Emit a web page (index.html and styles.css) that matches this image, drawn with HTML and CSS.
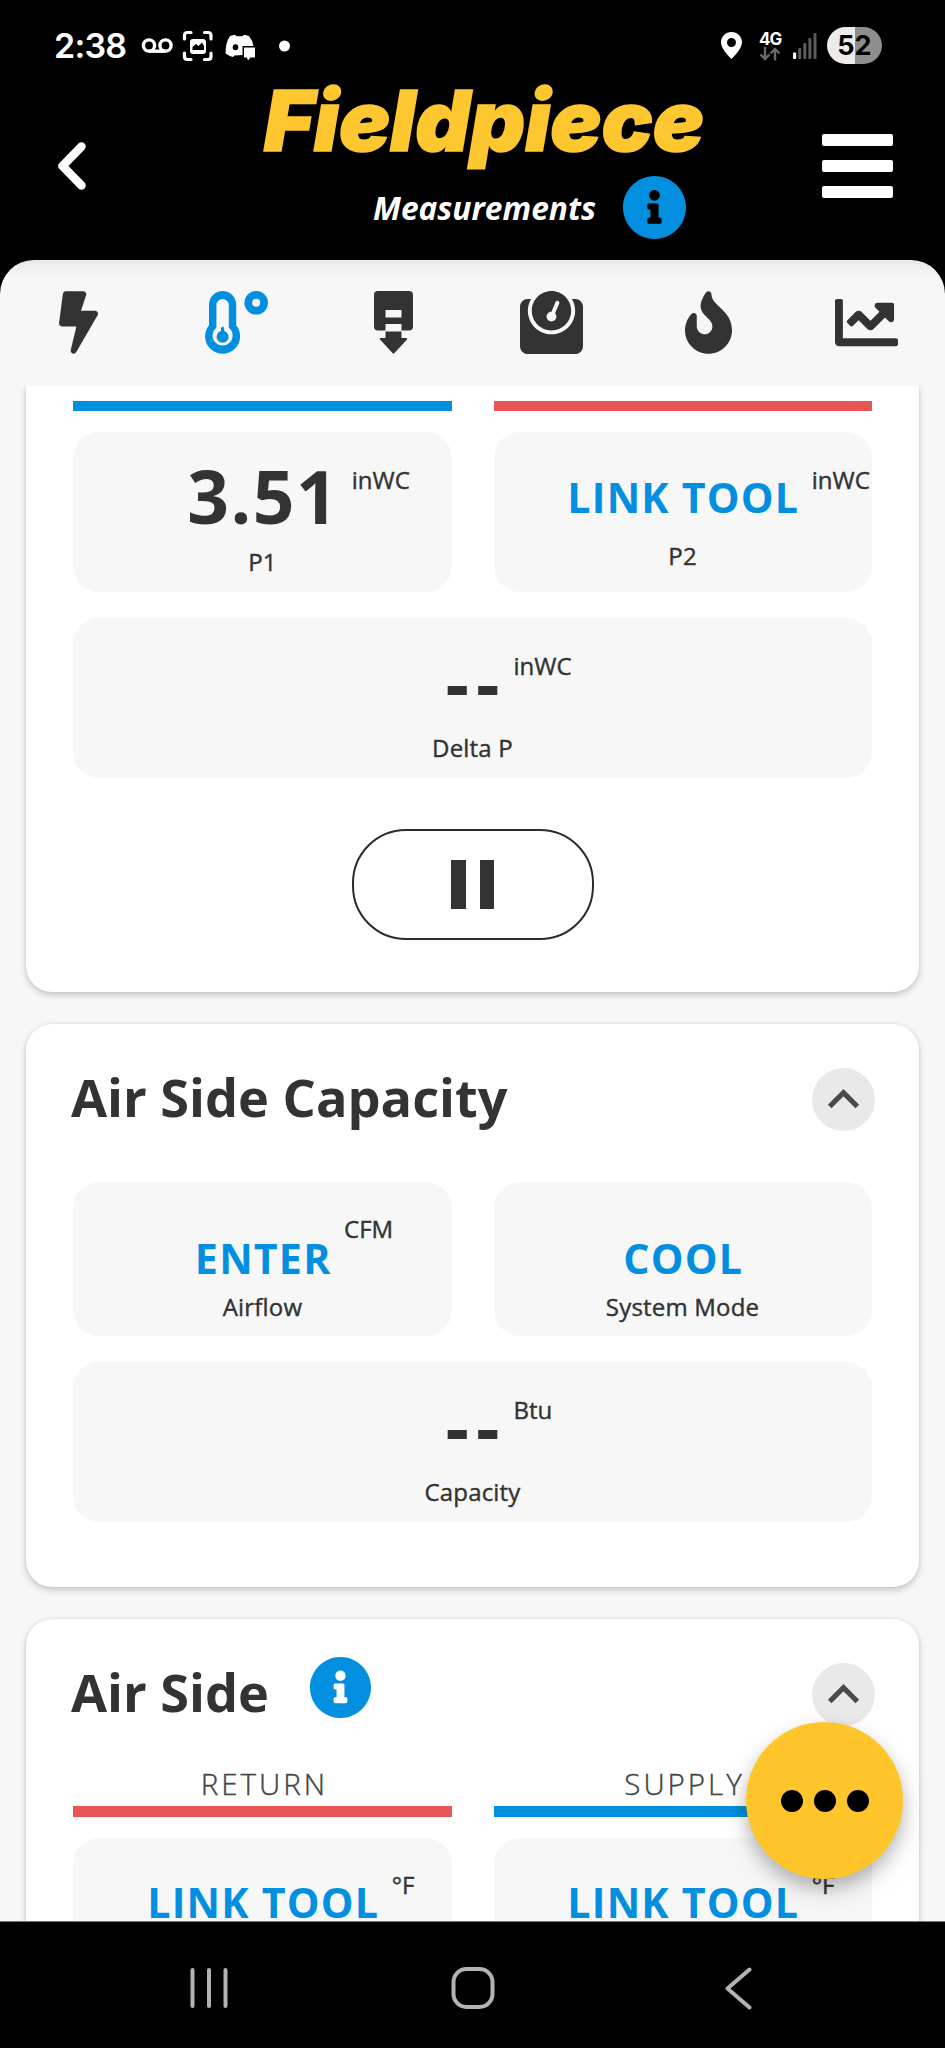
FILE: index.html
```html
<!DOCTYPE html>
<html lang="en">
<head>
    <meta charset="UTF-8">
    <meta name="viewport" content="width=device-width, initial-scale=1.0">
    <title>Measurements</title>
    <link rel="stylesheet" href="styles.css">
</head>
<body>
    <div class="screen">
        <!-- Status bar -->
        <div class="status-bar">
            <span class="clock">2:38</span>
            <svg class="status-left" width="150" height="40" viewBox="0 0 150 40" fill="none">
                <g stroke="#fff" stroke-width="3.4">
                    <circle cx="8" cy="19.5" r="5.6"/>
                    <circle cx="24.5" cy="19.5" r="5.6"/>
                    <path d="M8 25.2h16.5"/>
                </g>
                <g stroke="#fff" stroke-width="3.2" stroke-linecap="round">
                    <path d="M43.5 13V9.5q0-3 3-3H50M63.5 6.5H67q3 0 3 3V13M70 27v3.5q0 3-3 3h-3.5M50 33.5h-3.5q-3 0-3-3V27"/>
                </g>
                <rect x="49" y="13" width="16" height="15" rx="3" fill="#fff"/>
                <path d="M51.5 24v-3l3.5-3 2.500 2 3.500-3.500 2 3.500v4z" fill="#000"/>
                <path d="M89 10l5-1.200 1.500 1.500h6l1.500-1.500 5 1.200q4 5 4.500 10h-11v9l-8 .5-1.500 1.500q-4-1-7.500-3.500 0-11 4.500-17.500z" fill="#fff"/>
                <ellipse cx="94.5" cy="21.3" rx="2.8" ry="3" fill="#000"/>
                <path d="M103 21.5h11v10h-4.500l-2.500 3-1-3h-3z" fill="#fff"/>
                <circle cx="143.5" cy="20" r="5.5" fill="#fff"/>
            </svg>
            <svg class="pin" width="21" height="27" viewBox="0 0 21 27">
                <path fill="#fff" fill-rule="evenodd" d="M10.5 0C4.500 0 0 4.600 0 10.300 0 17.500 10.500 27 10.500 27S21 17.500 21 10.300C21 4.600 16.500 0 10.500 0zm0 6a4.500 4.500 0 1 1 0 9 4.500 4.500 0 0 1 0-9z"/>
            </svg>
            <div class="network">
                <span>4G</span>
                <svg width="22" height="14" viewBox="0 0 22 14" fill="none" stroke="#6a6a6a" stroke-width="2.4">
                    <path d="M6 0v12M1.500 7.500L6 12l4.500-4.500M16 13.500V2M11.500 6.500L16 2l4.500 4.500"/>
                </svg>
            </div>
            <svg class="signal" width="24" height="26" viewBox="0 0 24 26">
                <rect x="0" y="19.5" width="3.2" height="6.5" rx="1" fill="#fff"/>
                <g fill="#5c5c5c">
                    <rect x="5.2" y="15" width="3" height="11" rx="1"/>
                    <rect x="10.3" y="10" width="3" height="16" rx="1"/>
                    <rect x="15.4" y="5" width="3" height="21" rx="1"/>
                    <rect x="20.5" y="0" width="3" height="26" rx="1"/>
                </g>
            </svg>
            <span class="battery">52</span>
        </div>

        <!-- Header -->
        <header class="header">
            <svg class="back" width="28" height="48" viewBox="0 0 28 48" fill="none" stroke="#fff" stroke-width="8.5" stroke-linecap="round" stroke-linejoin="round">
                <path d="M23.5 4.5L4.5 24l19 19.5"/>
            </svg>
            <div class="brand">
                <svg class="logo" width="460" height="92" viewBox="0 0 460 92">
                    <text class="logo-text" x="3" y="71" textLength="440" lengthAdjust="spacingAndGlyphs">Fieldpiece</text>
                </svg>
                <div class="subtitle">
                    <span>Measurements</span>
                    <svg width="65" height="65" viewBox="0 0 512 512"><use href="#info"/></svg>
                </div>
            </div>
            <div class="menu"><i></i><i></i><i></i></div>
        </header>

        <!-- Tabs -->
        <nav class="tabs">
            <svg width="39" height="63" viewBox="0 0 320 512"><path d="M296 160H180.600l42.600-129.800C227.200 15 215.700 0 200 0H56C44 0 33.800 8.900 32.200 20.800l-32 240C-1.700 275.200 9.500 288 24 288h118.700L96.600 482.500c-3.600 15.200 8 29.500 23.300 29.500 8.400 0 16.400-4.400 20.800-12l176-304c9.300-15.900-2.200-36-20.700-36z"/></svg>
            <svg class="active" width="63" height="63" viewBox="0 0 63 63">
                <path d="M4 13.600a13.600 13.600 0 0 1 27.200 0v20.600a17.500 17.500 0 1 1-27.200 0z"/>
                <path class="hole" d="M11.400 14.200a6.200 6.200 0 0 1 12.400 0v22.500a10 10 0 1 1-12.400 0z"/>
                <path d="M16 37q1.600-3 3.200 0v2.900a6 6 0 1 1-3.200 0z"/>
                <circle class="ring" cx="51.2" cy="11.8" r="7.9"/>
            </svg>
            <svg width="39" height="63" viewBox="0 0 39 63">
                <path fill-rule="evenodd" d="M4 0h31q4 0 4 4v31.500q0 4-4 4h-7.500V33h-16v6.500H4q-4 0-4-4V4q0-4 4-4zm7.500 19v7.500h16V19z"/>
                <path d="M11.500 40.500h16V47H32q2 0 1 1.500L20.500 62q-1 1-2 0L6 48.500Q5 47 7 47h4.500z"/>
            </svg>
            <svg width="63" height="63" viewBox="0 0 512 512"><path d="M448 64h-25.980C438.440 92.280 448 125.010 448 160c0 105.870-86.130 192-192 192S64 265.870 64 160c0-34.990 9.560-67.720 25.980-96H64C28.710 64 0 92.710 0 128v320c0 35.290 28.710 64 64 64h384c35.290 0 64-28.710 64-64V128c0-35.290-28.710-64-64-64zM256 320c88.370 0 160-71.630 160-160S344.370 0 256 0 96 71.630 96 160s71.630 160 160 160zm-.3-151.940l33.580-78.360c3.500-8.170 12.940-11.920 21.030-8.410 8.120 3.480 11.880 12.890 8.410 21l-33.670 78.550C291.730 188 296 197.450 296 208c0 22.090-17.910 40-40 40s-40-17.910-40-40c0-21.980 17.760-39.770 39.700-39.940z"/></svg>
            <svg width="47" height="63" viewBox="0 0 384 512"><path d="M216 23.860c0-23.800-30.650-32.770-44.150-13.040C48 191.850 224 200 224 288c0 35.630-29.110 64.460-64.850 63.990-35.170-.45-63.150-29.770-63.150-64.940v-85.510c0-21.700-26.470-32.230-41.430-16.500C27.800 213.160 0 261.330 0 320c0 105.870 86.130 192 192 192s192-86.130 192-192c0-170.290-168-193-168-296.140z"/></svg>
            <svg width="63" height="63" viewBox="0 0 512 512"><path d="M496 384H64V80c0-8.840-7.160-16-16-16H16C7.160 64 0 71.160 0 80v336c0 17.670 14.330 32 32 32h464c8.840 0 16-7.160 16-16v-32c0-8.840-7.160-16-16-16zM464 96H345.940c-21.380 0-32.090 25.850-16.970 40.970l32.400 32.400L288 242.750l-73.370-73.370c-12.500-12.500-32.760-12.500-45.250 0l-68.690 68.690c-6.250 6.250-6.250 16.380 0 22.630l22.620 22.620c6.250 6.250 16.380 6.250 22.630 0L192 237.250l73.370 73.370c12.500 12.500 32.760 12.500 45.250 0l96-96 32.400 32.400c15.120 15.120 40.970 4.410 40.970-16.970V112c.01-8.840-7.150-16-15.990-16z"/></svg>
        </nav>

        <!-- Cards -->
        <main class="content">
            <section class="card card-pressure">
                <div class="grid">
                    <div class="bar blue"></div>
                    <div class="bar red"></div>
                    <div class="tile">
                        <div class="reading"><span class="value">3.51</span><span class="unit">inWC</span></div>
                        <div class="label">P1</div>
                    </div>
                    <div class="tile">
                        <div class="reading action"><span class="value">LINK TOOL</span><span class="unit">inWC</span></div>
                        <div class="label">P2</div>
                    </div>
                    <div class="tile wide">
                        <div class="reading"><span class="value empty">--</span><span class="unit">inWC</span></div>
                        <div class="label">Delta P</div>
                    </div>
                </div>
                <button class="pause"><i></i><i></i></button>
            </section>

            <section class="card card-capacity">
                <div class="card-head">
                    <h2>Air Side Capacity</h2>
                    <button class="collapse"><svg width="63" height="63" viewBox="0 0 63 63"><use href="#up"/></svg></button>
                </div>
                <div class="grid">
                    <div class="tile short">
                        <div class="reading action"><span class="value">ENTER</span><span class="unit">CFM</span></div>
                        <div class="label">Airflow</div>
                    </div>
                    <div class="tile short">
                        <div class="reading action"><span class="value">COOL</span></div>
                        <div class="label">System Mode</div>
                    </div>
                    <div class="tile wide">
                        <div class="reading"><span class="value empty">--</span><span class="unit">Btu</span></div>
                        <div class="label">Capacity</div>
                    </div>
                </div>
            </section>

            <section class="card card-air">
                <div class="card-head">
                    <h2>Air Side</h2>
                    <svg class="card-info" width="63" height="63" viewBox="0 0 512 512"><use href="#info"/></svg>
                    <button class="collapse"><svg width="63" height="63" viewBox="0 0 63 63"><use href="#up"/></svg></button>
                </div>
                <div class="grid">
                    <div class="column-name">RETURN</div>
                    <div class="column-name">SUPPLY</div>
                    <div class="bar red"></div>
                    <div class="bar blue"></div>
                    <div class="tile">
                        <div class="reading action"><span class="value">LINK TOOL</span><span class="unit">°F</span></div>
                    </div>
                    <div class="tile">
                        <div class="reading action"><span class="value">LINK TOOL</span><span class="unit">°F</span></div>
                    </div>
                </div>
            </section>

            <button class="fab"><i></i><i></i><i></i></button>
        </main>

        <!-- System navigation -->
        <footer class="nav-bar">
            <svg width="40" height="44" viewBox="0 0 40 44"><path d="M3.500 4v36M20 4v36M36.500 4v36"/></svg>
            <svg width="44" height="44" viewBox="0 0 44 44"><rect x="2.5" y="3" width="39" height="38" rx="13"/></svg>
            <svg width="28" height="44" viewBox="0 0 28 44"><path d="M25.500 3.500L3.500 22.500l22 19"/></svg>
        </footer>
    </div>

    <!-- Shared icons -->
    <svg class="defs" width="0" height="0">
        <symbol id="info" viewBox="0 0 512 512"><path d="M256 8C119.043 8 8 119.083 8 256c0 136.997 111.043 248 248 248s248-111.003 248-248C504 119.083 392.957 8 256 8zm0 110c23.196 0 42 18.804 42 42s-18.804 42-42 42-42-18.804-42-42 18.804-42 42-42zm56 254c0 6.627-5.373 12-12 12h-88c-6.627 0-12-5.373-12-12v-24c0-6.627 5.373-12 12-12h12v-64h-12c-6.627 0-12-5.373-12-12v-24c0-6.627 5.373-12 12-12h64c6.627 0 12 5.373 12 12v100h12c6.627 0 12 5.373 12 12v24z" fill="#038fdf"/></symbol>
        <symbol id="up" viewBox="0 0 63 63"><path d="M17.700 38.500L31.500 24.700l13.800 13.800" fill="none" stroke="#4a4a4a" stroke-width="5.2"/></symbol>
    </svg>
</body>
</html>
```
FILE: styles.css
```css
* {
    box-sizing: border-box;
}
body {
    margin: 0;
    background: #000;
    font-family: "Open Sans", "Noto Sans", sans-serif;
    color: #333;
}
svg {
    display: block;
    flex-shrink: 0;
}
button {
    border: none;
    padding: 0;
    background: none;
}
.screen {
    display: flex;
    flex-direction: column;
    width: 945px;
    height: 2048px;
    overflow: hidden;
}
.defs {
    display: none;
}

/* Status bar */
.status-bar {
    display: flex;
    align-items: center;
    height: 72px;
    padding: 19px 63px 0 54px;
    color: #fff;
    font-family: Inter, sans-serif;
}
.clock {
    width: 72px;
    font-size: 34px;
    font-weight: 600;
    line-height: 40px;
    letter-spacing: -0.8px;
}
.status-left {
    margin-left: 15px;
}
.pin {
    margin-left: auto;
}
.network {
    width: 22px;
    margin: 0 12px 0 17px;
    font-size: 17px;
    font-weight: 700;
    line-height: 16px;
    letter-spacing: -1px;
}
.signal {
    margin-right: 10px;
}
.battery {
    width: 55px;
    height: 37px;
    border-radius: 19px;
    background: linear-gradient(90deg, #ececec 28px, #8e8e8e 28px);
    color: #000;
    font-size: 27px;
    font-weight: 700;
    line-height: 37px;
    text-align: center;
}

/* Header */
.header {
    display: flex;
    align-items: center;
    height: 188px;
    padding: 0 52px 0 58px;
}
.brand {
    align-self: flex-start;
    margin-left: 175px;
    padding-top: 8px;
}
.logo {
    overflow: visible;
}
.logo-text {
    font-family: Inter, sans-serif;
    font-size: 84px;
    font-weight: 900;
    font-style: italic;
    fill: #ffc72f;
    stroke: #ffc72f;
    stroke-width: 1.6px;
}
.subtitle {
    display: flex;
    align-items: center;
    gap: 26px;
    margin: 3px 0 0 112px;
    color: #fff;
    font-size: 31.7px;
    font-weight: 700;
    font-style: italic;
    line-height: 65px;
}
.menu {
    display: flex;
    flex-direction: column;
    gap: 14px;
    margin-left: auto;
}
.menu i {
    width: 71px;
    height: 11.7px;
    border-radius: 2px;
    background: #fff;
}

/* Tabs */
.tabs {
    display: grid;
    grid-template-columns: repeat(6, 1fr);
    justify-items: center;
    flex-shrink: 0;
    height: 126px;
    padding-top: 31px;
    border-radius: 34px 34px 0 0;
    background: linear-gradient(#e9e9e9, #f7f7f7 18px);
    fill: #333;
}
.tabs .active {
    fill: #038fdf;
}
.tabs .hole {
    fill: #f7f7f7;
}
.tabs .ring {
    fill: none;
    stroke: #038fdf;
    stroke-width: 7.8px;
}

/* Cards */
.content {
    position: relative;
    height: 1535px;
    padding: 0 26px;
    overflow: hidden;
    background: #f7f7f7;
}
.card {
    margin-bottom: 32px;
    padding: 0 47.4px;
    border-radius: 26px;
    background: #fff;
    box-shadow: 0 3px 7px rgba(0, 0, 0, 0.2), 0 0 3px rgba(0, 0, 0, 0.08);
}
.card-pressure {
    height: 606px;
    padding-top: 14.5px;
    border-radius: 0 0 26px 26px;
}
.card-capacity {
    height: 563px;
}
.card-air {
    height: 600px;
}
.card-head {
    display: flex;
    align-items: center;
    height: 151px;
}
.card-head h2 {
    margin: -5px 0 0 -2.5px;
    font-size: 52.3px;
    font-weight: 700;
    line-height: 70px;
}
.card-info {
    margin: -15px 0 0 40px;
}
.collapse {
    width: 63px;
    height: 63px;
    margin: 0 -3px 0 auto;
    border-radius: 50%;
    background: #e9e9e9;
}
.grid {
    display: grid;
    grid-template-columns: 1fr 1fr;
    column-gap: 42px;
}
.card-capacity .grid {
    margin-top: 6.5px;
}
.column-name {
    margin-top: -6.5px;
    padding: 0 0 3.5px 4px;
    font-size: 29.5px;
    font-weight: 300;
    line-height: 39px;
    letter-spacing: 3px;
    text-align: center;
    color: #444;
    -webkit-text-stroke: 0.4px #444;
}
.bar {
    height: 10.5px;
    margin-bottom: 21px;
}
.blue {
    background: #038fdf;
}
.red {
    background: #ea5556;
}
.tile {
    height: 159.5px;
    margin-bottom: 26.5px;
    padding-top: 27px;
    border-radius: 26px;
    background: #f7f7f7;
}
.wide {
    grid-column: 1 / 3;
}
.reading {
    display: grid;
    grid-template-columns: 1fr auto 1fr;
    height: 86.7px;
    white-space: nowrap;
}
.value {
    grid-column: 2;
    margin-right: -1.5px;
    font-size: 73px;
    font-weight: 700;
    line-height: 73px;
    letter-spacing: 1.5px;
}
.empty {
    letter-spacing: 7px;
    margin-right: -7px;
}
.unit {
    margin: 4.7px 0 0 14px;
    font-size: 24px;
    line-height: 32px;
    -webkit-text-stroke: 0.4px #333;
}
.label {
    font-size: 24px;
    line-height: 32px;
    letter-spacing: 0.2px;
    text-align: center;
    -webkit-text-stroke: 0.4px #333;
}
.action {
    height: 80.8px;
}
.action .value {
    margin-top: 1.5px;
    color: #038fdf;
    font-size: 41.2px;
    letter-spacing: 1.2px;
}
.short {
    height: 154px;
}
.short .reading {
    height: 82.5px;
}
.short .value {
    margin-top: 13px;
}
.pause {
    display: flex;
    justify-content: center;
    align-items: center;
    gap: 14px;
    width: 242px;
    height: 111px;
    margin: 25px auto 0;
    border: 2.6px solid #2b2b2b;
    border-radius: 54px;
}
.pause i {
    width: 14.5px;
    height: 49px;
    background: #333;
}

/* Floating menu */
.fab {
    position: absolute;
    top: 1336px;
    right: 42px;
    display: flex;
    justify-content: center;
    align-items: center;
    gap: 11px;
    width: 157px;
    height: 157px;
    border-radius: 50%;
    background: #ffc52a;
    box-shadow: 0 8px 16px rgba(0, 0, 0, 0.2), 0 12px 30px rgba(0, 0, 0, 0.12);
}
.fab i {
    width: 22px;
    height: 22px;
    border-radius: 50%;
    background: #000;
}

/* System navigation */
.nav-bar {
    display: grid;
    grid-template-columns: repeat(3, 1fr);
    justify-items: center;
    flex: 1;
    padding: 44px 75px 0 77px;
    border-top: 1px solid #777;
    fill: none;
    stroke: #b3b3b3;
    stroke-width: 4px;
    stroke-linecap: round;
    stroke-linejoin: round;
}
```
